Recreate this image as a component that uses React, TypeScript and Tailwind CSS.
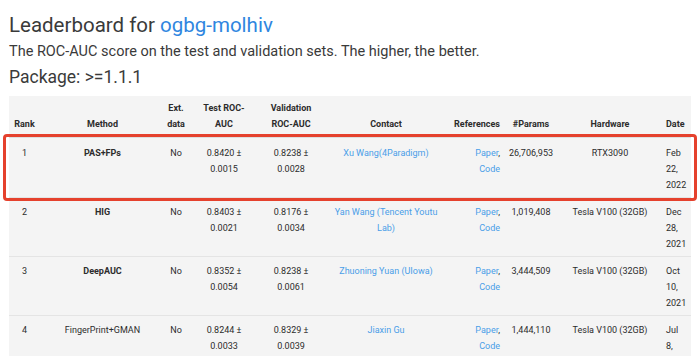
import React from 'react';

type Row = {
  rank: string;
  method: string;
  bold: boolean;
  test: [string, string];
  valid: [string, string];
  contact: string;
  params: string;
  hardware: string;
  date: string;
};

const rows: Row[] = [
  { rank: '1', method: 'PAS+FPs', bold: true, test: ['0.8420', '0.0015'], valid: ['0.8238', '0.0028'], contact: 'Xu Wang(4Paradigm)', params: '26,706,953', hardware: 'RTX3090', date: 'Feb 22, 2022' },
  { rank: '2', method: 'HIG', bold: true, test: ['0.8403', '0.0021'], valid: ['0.8176', '0.0034'], contact: 'Yan Wang (Tencent Youtu Lab)', params: '1,019,408', hardware: 'Tesla V100 (32GB)', date: 'Dec 28, 2021' },
  { rank: '3', method: 'DeepAUC', bold: true, test: ['0.8352', '0.0054'], valid: ['0.8238', '0.0061'], contact: 'Zhuoning Yuan (UIowa)', params: '3,444,509', hardware: 'Tesla V100 (32GB)', date: 'Oct 10, 2021' },
  { rank: '4', method: 'FingerPrint+GMAN', bold: false, test: ['0.8244', '0.0033'], valid: ['0.8329', '0.0039'], contact: 'Jiaxin Gu', params: '1,444,110', hardware: 'Tesla V100 (32GB)', date: 'Jul 8, 2021' },
];

export default function App() {
  return (
    <div className="w-[700px] h-[356px] overflow-hidden bg-white px-[9px] pt-[10px] font-['Roboto',sans-serif] text-[#333]">
      <h1 className="text-[20.5px] leading-[30px] text-[#3a3a3a]">
        Leaderboard for <a className="text-[#2f86e0]">ogbg-molhiv</a>
      </h1>
      <p className="mt-[2px] text-[14.5px] leading-[20px] text-[#3a3a3a]">
        The ROC-AUC score on the test and validation sets. The higher, the better.
      </p>
      <h2 className="mt-[2px] text-[17.5px] leading-[26px] text-[#3a3a3a]">Package: &gt;=1.1.1</h2>

      <div className="relative mt-[6px]">
        <table className="table-fixed w-[682px] bg-[#f4f4f4] text-[9px] leading-[16px] text-[#2c2c2c] border-collapse">
          <colgroup>
            <col className="w-[31px]" />
            <col className="w-[125px]" />
            <col className="w-[22px]" />
            <col className="w-[74px]" />
            <col className="w-[60px]" />
            <col className="w-[130px]" />
            <col className="w-[54px]" />
            <col className="w-[52px]" />
            <col className="w-[106px]" />
            <col className="w-[28px]" />
          </colgroup>
          <thead>
            <tr className="border-b border-[#dedede] font-bold align-bottom">
              <th className="pt-[4px] pb-[5px] text-center">Rank</th>
              <th className="pt-[4px] pb-[5px] text-center">Method</th>
              <th className="pt-[4px] pb-[5px] text-center">Ext. data</th>
              <th className="pt-[4px] pb-[5px] px-[10px] text-center">Test ROC-AUC</th>
              <th className="pt-[4px] pb-[5px] px-[6px] text-center">Validation ROC-AUC</th>
              <th className="pt-[4px] pb-[5px] text-center">Contact</th>
              <th className="pt-[4px] pb-[5px] pr-[5px] text-right whitespace-nowrap">References</th>
              <th className="pt-[4px] pb-[5px] text-center">#Params</th>
              <th className="pt-[4px] pb-[5px] text-center">Hardware</th>
              <th className="pt-[4px] pb-[5px] pl-[3px] text-left">Date</th>
            </tr>
          </thead>
          <tbody>
            {rows.map((r, i) => (
              <tr key={r.rank} className="border-b border-[#e4e4e4] align-top">
                <td className={`${i === 0 ? 'pt-[7px]' : 'pt-[6px]'} pb-[4px] text-center`}>{r.rank}</td>
                <td className={`${i === 0 ? 'pt-[7px]' : 'pt-[6px]'} pb-[4px] text-center ${r.bold ? 'font-bold' : ''}`}>{r.method}</td>
                <td className={`${i === 0 ? 'pt-[7px]' : 'pt-[6px]'} pb-[4px] text-center`}>No</td>
                <td className={`${i === 0 ? 'pt-[7px]' : 'pt-[6px]'} pb-[4px] text-center`}>
                  {r.test[0]} ±<br />{r.test[1]}
                </td>
                <td className={`${i === 0 ? 'pt-[7px]' : 'pt-[6px]'} pb-[4px] text-center`}>
                  {r.valid[0]} ±<br />{r.valid[1]}
                </td>
                <td className={`${i === 0 ? 'pt-[7px]' : 'pt-[6px]'} pb-[4px] px-[6px] text-center text-[#4a9ee8]`}>{r.contact}</td>
                <td className={`${i === 0 ? 'pt-[7px]' : 'pt-[6px]'} pb-[4px] pr-[5px] text-right`}>
                  <a className="text-[#4a9ee8]">Paper</a>,<br />
                  <a className="text-[#4a9ee8]">Code</a>
                </td>
                <td className={`${i === 0 ? 'pt-[7px]' : 'pt-[6px]'} pb-[4px] text-center whitespace-nowrap`}>{r.params}</td>
                <td className={`${i === 0 ? 'pt-[7px]' : 'pt-[6px]'} pb-[4px] text-center whitespace-nowrap`}>{r.hardware}</td>
                <td className={`${i === 0 ? 'pt-[7px]' : 'pt-[6px]'} pb-[4px] pl-[3px] text-left`}>
                  {r.date.split(' ').map((w, k) => (
                    <div key={k}>{w}</div>
                  ))}
                </td>
              </tr>
            ))}
          </tbody>
        </table>
        <div className="absolute left-[-6px] top-[38px] w-[694px] h-[67px] rounded-[4px] border-[3px] border-[#e5412d] pointer-events-none" />
      </div>
    </div>
  );
}
